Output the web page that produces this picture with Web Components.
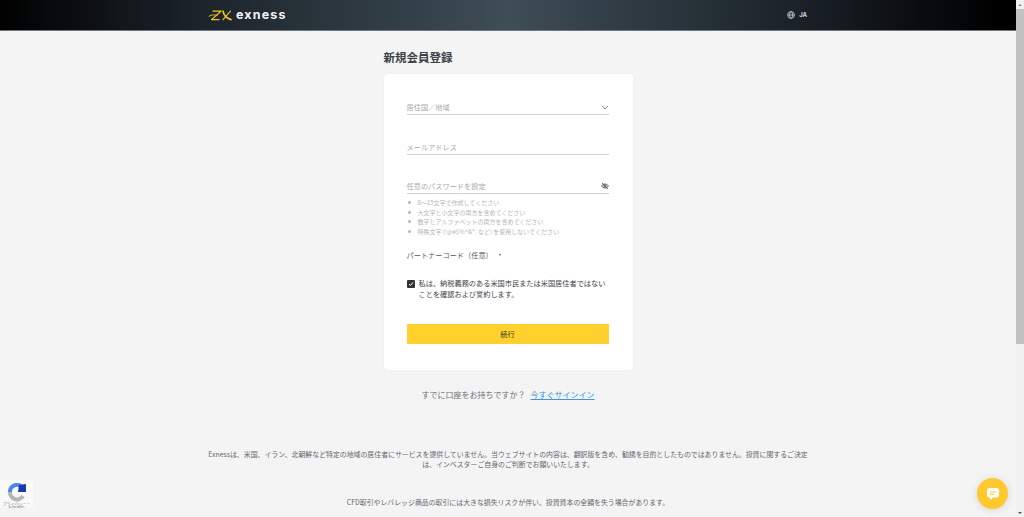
<!DOCTYPE html>
<html lang="ja">
<head>
<meta charset="utf-8">
<title>Exness</title>
<style>
  html, body{
    margin: 0;
    height: 517px;
    overflow: hidden;
    background: #f4f4f4;
    font-family: "Noto Sans CJK JP", "Noto Sans", sans-serif;
  }
  body{
    display: flex;
  }
</style>
</head>
<body>
  <ex-page>
    <ex-header></ex-header>
    <ex-signup></ex-signup>
    <ex-disclaimer></ex-disclaimer>
  </ex-page>
  <ex-scrollbar></ex-scrollbar>
  <ex-recaptcha></ex-recaptcha>
  <ex-chat></ex-chat>

<script>
class ExPage extends HTMLElement{
  constructor(){
    super();
    this.attachShadow({mode:'open'}).innerHTML = `
      <style>
        :host{
          display: flex;
          flex-direction: column;
          width: 1016px;
          height: 517px;
          overflow: hidden;
        }
      </style>
      <slot></slot>
    `;
  }
}

class ExHeader extends HTMLElement{
  constructor(){
    super();
    this.attachShadow({mode:'open'}).innerHTML = `
      <style>
        :host{
          display: flex;
          flex: none;
          align-items: center;
          justify-content: space-between;
          box-sizing: border-box;
          height: 31px;
          padding: 0 209px 0 208px;
          background: linear-gradient(90deg, #000 0%, #1b2329 19%, #3f4d57 50%, #1b2329 78%, #000 98%);
          border-bottom: 1px solid #6f7880;
        }
        .logo{
          display: flex;
          align-items: center;
          gap: 4px;
        }
        .word{
          font: 700 12.5px/14px Inter, "Liberation Sans", sans-serif;
          letter-spacing: 1.15px;
          color: #f2f2f2;
        }
        .lang{
          display: flex;
          align-items: center;
          gap: 4px;
          font: 700 6px/8px Inter, "Liberation Sans", sans-serif;
          color: #d8d8d8;
        }
      </style>
      <div class="logo">
        <svg width="24" height="11" viewBox="0 0 24 11" fill="none" stroke="#f5c22a" stroke-linecap="round" stroke-linejoin="round">
          <path d="M5 1.2H13L3.5 9.6H11" stroke-width="1.2"/>
          <path d="M1 6.2C4 4.4 7 4.6 9 5.4" stroke-width="0.9"/>
          <path d="M15 1.2C15.6 4.6 18.5 8.4 23 9.6" stroke-width="1.7"/>
          <path d="M22.5 1.2L15 9.6" stroke-width="1.1"/>
        </svg>
        <span class="word">exness</span>
      </div>
      <div class="lang">
        <svg width="8" height="8" viewBox="0 0 8 8" fill="none" stroke="#cfcfcf" stroke-width="0.8">
          <circle cx="4" cy="4" r="3.4"/>
          <ellipse cx="4" cy="4" rx="1.5" ry="3.4"/>
          <path d="M0.6 4H7.4"/>
        </svg>
        <span>JA</span>
      </div>
    `;
  }
}

class ExField extends HTMLElement{
  constructor(){
    super();
    this.attachShadow({mode:'open'}).innerHTML = `
      <style>
        :host{
          display: flex;
          align-items: center;
          justify-content: space-between;
          box-sizing: border-box;
          height: 14px;
          border-bottom: 1px solid #cfd1d3;
          padding-bottom: 1px;
          font-size: 7.2px;
          line-height: 12px;
          color: #a9abad;
        }
        ::slotted(svg){
          display: block;
        }
      </style>
      <span><slot></slot></span>
      <slot name="icon"></slot>
    `;
  }
}

class ExSignup extends HTMLElement{
  constructor(){
    super();
    this.attachShadow({mode:'open'}).innerHTML = `
      <style>
        :host{
          display: block;
          flex: none;
          box-sizing: border-box;
          width: 249px;
          margin: 0 auto;
          padding-top: 18px;
        }
        h1{
          margin: 0 0 8px;
          font-size: 11.5px;
          line-height: 17px;
          font-weight: 700;
          color: #3c4249;
        }
        .card{
          box-sizing: border-box;
          height: 296px;
          padding: 27px 24px 0 23px;
          background: #fff;
          border-radius: 4px;
          box-shadow: 0 0 3px rgba(0,0,0,0.04);
        }
        .fields{
          display: grid;
          row-gap: 25.5px;
        }
        ul{
          margin: 4px 0 0;
          padding: 0;
          list-style: none;
          font-size: 6px;
          line-height: 9.5px;
          color: #b4b6b8;
        }
        li{
          display: flex;
          align-items: center;
          gap: 7px;
          white-space: nowrap;
        }
        li::before{
          content: "";
          width: 3px;
          height: 3px;
          border-radius: 50%;
          background: #b4b6b8;
          margin-left: 1px;
        }
        .partner{
          display: flex;
          align-items: center;
          gap: 6px;
          margin-top: 13px;
          font-size: 7.2px;
          line-height: 12px;
          color: #55595e;
        }
        .arrow{
          width: 0;
          height: 0;
          border-left: 1.6px solid transparent;
          border-right: 1.6px solid transparent;
          border-top: 2.2px solid #55595e;
        }
        .agree{
          display: flex;
          gap: 4px;
          margin-top: 17px;
          font-size: 7.2px;
          line-height: 11px;
          color: #3c4249;
        }
        .check{
          flex: none;
          display: grid;
          place-items: center;
          width: 8px;
          height: 8px;
          margin-top: 1.5px;
          border-radius: 1px;
          background: #2f3237;
        }
        button{
          display: block;
          width: 100%;
          height: 20px;
          margin-top: 24px;
          padding: 0;
          border: 0;
          border-radius: 1px;
          background: #ffd02e;
          color: #3a3a2a;
          font: inherit;
          font-size: 7.2px;
          line-height: 12px;
        }
        .signin{
          display: flex;
          justify-content: center;
          gap: 5px;
          margin-top: 18px;
          font-size: 8px;
          line-height: 14px;
          color: #6b6f74;
          white-space: nowrap;
        }
        a{
          color: #3f93d6;
          text-decoration: underline;
        }
      </style>
      <h1>新規会員登録</h1>
      <div class="card">
        <div class="fields">
          <ex-field>居住国／地域
            <svg slot="icon" width="8" height="5" viewBox="0 0 8 5" fill="none" stroke="#7d8186" stroke-width="0.9"><path d="M1 1L4 4L7 1"/></svg>
          </ex-field>
          <ex-field>メールアドレス</ex-field>
          <ex-field>任意のパスワードを設定
            <svg slot="icon" width="8" height="8" viewBox="0 0 8 8" fill="none" stroke="#4b4f54" stroke-width="0.9"><path d="M0.5 4C2.4 1.4 5.6 1.4 7.5 4C5.6 6.6 2.4 6.6 0.5 4Z"/><circle cx="4" cy="4" r="1.1"/><path d="M1.2 1L6.8 7"/></svg>
          </ex-field>
        </div>
        <ul>
          <li>8～15文字で作成してください</li>
          <li>大文字と小文字の両方を含めてください</li>
          <li>数字とアルファベットの両方を含めてください</li>
          <li>特殊文字 (!@#$%^&amp;*. など) を使用しないでください</li>
        </ul>
        <div class="partner">パートナーコード（任意）<span class="arrow"></span></div>
        <div class="agree">
          <span class="check">
            <svg width="6" height="6" viewBox="0 0 6 6" fill="none" stroke="#fff" stroke-width="1"><path d="M1 3L2.5 4.4L5 1.4"/></svg>
          </span>
          <span>私は、納税義務のある米国市民または米国居住者ではないことを確認および誓約します。</span>
        </div>
        <button type="button">続行</button>
      </div>
      <div class="signin">すでに口座をお持ちですか？ <a href="#">今すぐサインイン</a></div>
    `;
  }
}

class ExDisclaimer extends HTMLElement{
  constructor(){
    super();
    this.attachShadow({mode:'open'}).innerHTML = `
      <style>
        :host{
          display: block;
          flex: none;
          box-sizing: border-box;
          width: 600px;
          margin: 0 auto;
          padding-top: 48px;
          text-align: center;
          font-size: 6.9px;
          line-height: 9.5px;
          color: #62666b;
        }
        p{
          margin: 0 0 29px;
        }
      </style>
      <p>Exnessは、米国、イラン、北朝鮮など特定の地域の居住者にサービスを提供していません。当ウェブサイトの内容は、翻訳版を含め、勧誘を目的としたものではありません。投資に関するご決定は、インベスターご自身のご判断でお願いいたします。</p>
      <p>CFD取引やレバレッジ商品の取引には大きな損失リスクが伴い、投資資本の全額を失う場合があります。</p>
    `;
  }
}

class ExScrollbar extends HTMLElement{
  constructor(){
    super();
    this.attachShadow({mode:'open'}).innerHTML = `
      <style>
        :host{
          display: flex;
          flex-direction: column;
          flex: none;
          width: 8px;
          height: 517px;
          background: #f1f1f1;
        }
        .up, .down{
          flex: none;
          height: 9px;
          display: grid;
          place-items: center;
        }
        .up::before, .down::before{
          content: "";
          border-left: 2px solid transparent;
          border-right: 2px solid transparent;
        }
        .up::before{
          border-bottom: 2px solid #8a8a8a;
        }
        .down::before{
          border-top: 2px solid #505050;
        }
        .thumb{
          flex: none;
          height: 335px;
          background: #c1c1c1;
        }
        .rest{
          flex: 1;
        }
      </style>
      <div class="up"></div>
      <div class="thumb"></div>
      <div class="rest"></div>
      <div class="down"></div>
    `;
  }
}

class ExRecaptcha extends HTMLElement{
  constructor(){
    super();
    this.attachShadow({mode:'open'}).innerHTML = `
      <style>
        :host{
          position: fixed;
          left: 0;
          top: 480px;
          width: 33px;
          height: 28px;
          background: #f9f9f9;
          text-align: center;
          overflow: hidden;
        }
        svg{
          display: block;
          margin: 3px auto 0;
        }
        div{
          font-size: 4px;
          line-height: 4px;
          color: #777;
          white-space: nowrap;
        }
      </style>
      <svg width="20" height="19" viewBox="0 0 20 19" fill="none">
        <path d="M3 9A7 7 0 0 1 15 4" stroke="#4a86ee" stroke-width="4"/>
        <path d="M12 2L19 1V9H11Z" fill="#1c3aa9"/>
        <path d="M3 9A7 7 0 0 0 16 13" stroke="#b5b5b5" stroke-width="4"/>
      </svg>
      <div>プライバシー・</div>
      <div>利用規約</div>
    `;
  }
}

class ExChat extends HTMLElement{
  constructor(){
    super();
    this.attachShadow({mode:'open'}).innerHTML = `
      <style>
        :host{
          position: fixed;
          left: 977px;
          top: 478px;
          width: 31px;
          height: 31px;
          display: grid;
          place-items: center;
          border-radius: 50%;
          background: #ffc82f;
          box-shadow: 0 1px 8px rgba(0,0,0,0.12);
        }
      </style>
      <svg width="14" height="14" viewBox="0 0 14 14">
        <path d="M3.5 1H10.5A2.5 2.5 0 0 1 13 3.5V8A2.5 2.5 0 0 1 10.5 10.5H7L4 13V10.5H3.5A2.5 2.5 0 0 1 1 8V3.5A2.5 2.5 0 0 1 3.5 1Z" fill="#fff"/>
        <path d="M3.8 4.6H10.2V5.6H3.8ZM3.8 6.8H8V7.8H3.8Z" fill="#ffc82f"/>
      </svg>
    `;
  }
}

customElements.define('ex-page', ExPage);
customElements.define('ex-header', ExHeader);
customElements.define('ex-field', ExField);
customElements.define('ex-signup', ExSignup);
customElements.define('ex-disclaimer', ExDisclaimer);
customElements.define('ex-scrollbar', ExScrollbar);
customElements.define('ex-recaptcha', ExRecaptcha);
customElements.define('ex-chat', ExChat);
</script>
</body>
</html>
